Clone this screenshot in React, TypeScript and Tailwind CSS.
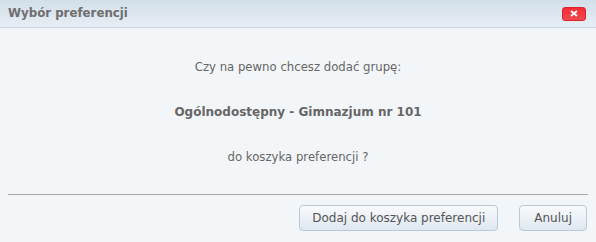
import React from "react";

export default function App() {
  return (
    <div className="w-[596px] h-[242px] bg-[#f3f6f9] flex flex-col font-['DejaVu_Sans',sans-serif] text-[#666]">
      <div className="h-[28px] shrink-0 flex items-center justify-between pl-[8px] pr-[10px] bg-gradient-to-b from-[#d2dfea] to-[#e8eef4] border-b border-[#c5d5e3]">
        <span className="text-[11.8px] font-bold text-[#6e6e6e]">Wybór preferencji</span>
        <button className="w-[24px] h-[14px] rounded-[3px] bg-gradient-to-b from-[#f52b33] to-[#f0484e] border border-[#d9242b] flex items-center justify-center">
          <svg width="8" height="7" viewBox="0 0 8 7">
            <path d="M1 1 L7 6 M7 1 L1 6" stroke="white" strokeWidth="1.8" />
          </svg>
        </button>
      </div>
      <div className="flex flex-col items-center text-[11.7px] pt-[31px]">
        <p className="leading-[16px]">Czy na pewno chcesz dodać grupę:</p>
        <p className="leading-[16px] mt-[29px] font-bold text-[12px] text-[#666]">Ogólnodostępny - Gimnazjum nr 101</p>
        <p className="leading-[16px] mt-[29px]">do koszyka preferencji ?</p>
      </div>
      <div className="mx-[8px] mt-[29px] border-t border-[#a8a8a8]" />
      <div className="flex justify-end gap-[21px] pr-[9px] pt-[10px]">
        <button className="h-[26px] px-[12px] rounded-[4px] border border-[#b9c9d8] bg-gradient-to-b from-[#f8fafc] to-[#dfe8f0] text-[12px] text-[#555]">
          Dodaj do koszyka preferencji
        </button>
        <button className="h-[26px] px-[14px] rounded-[4px] border border-[#b9c9d8] bg-gradient-to-b from-[#f8fafc] to-[#dfe8f0] text-[12px] text-[#555]">
          Anuluj
        </button>
      </div>
    </div>
  );
}
